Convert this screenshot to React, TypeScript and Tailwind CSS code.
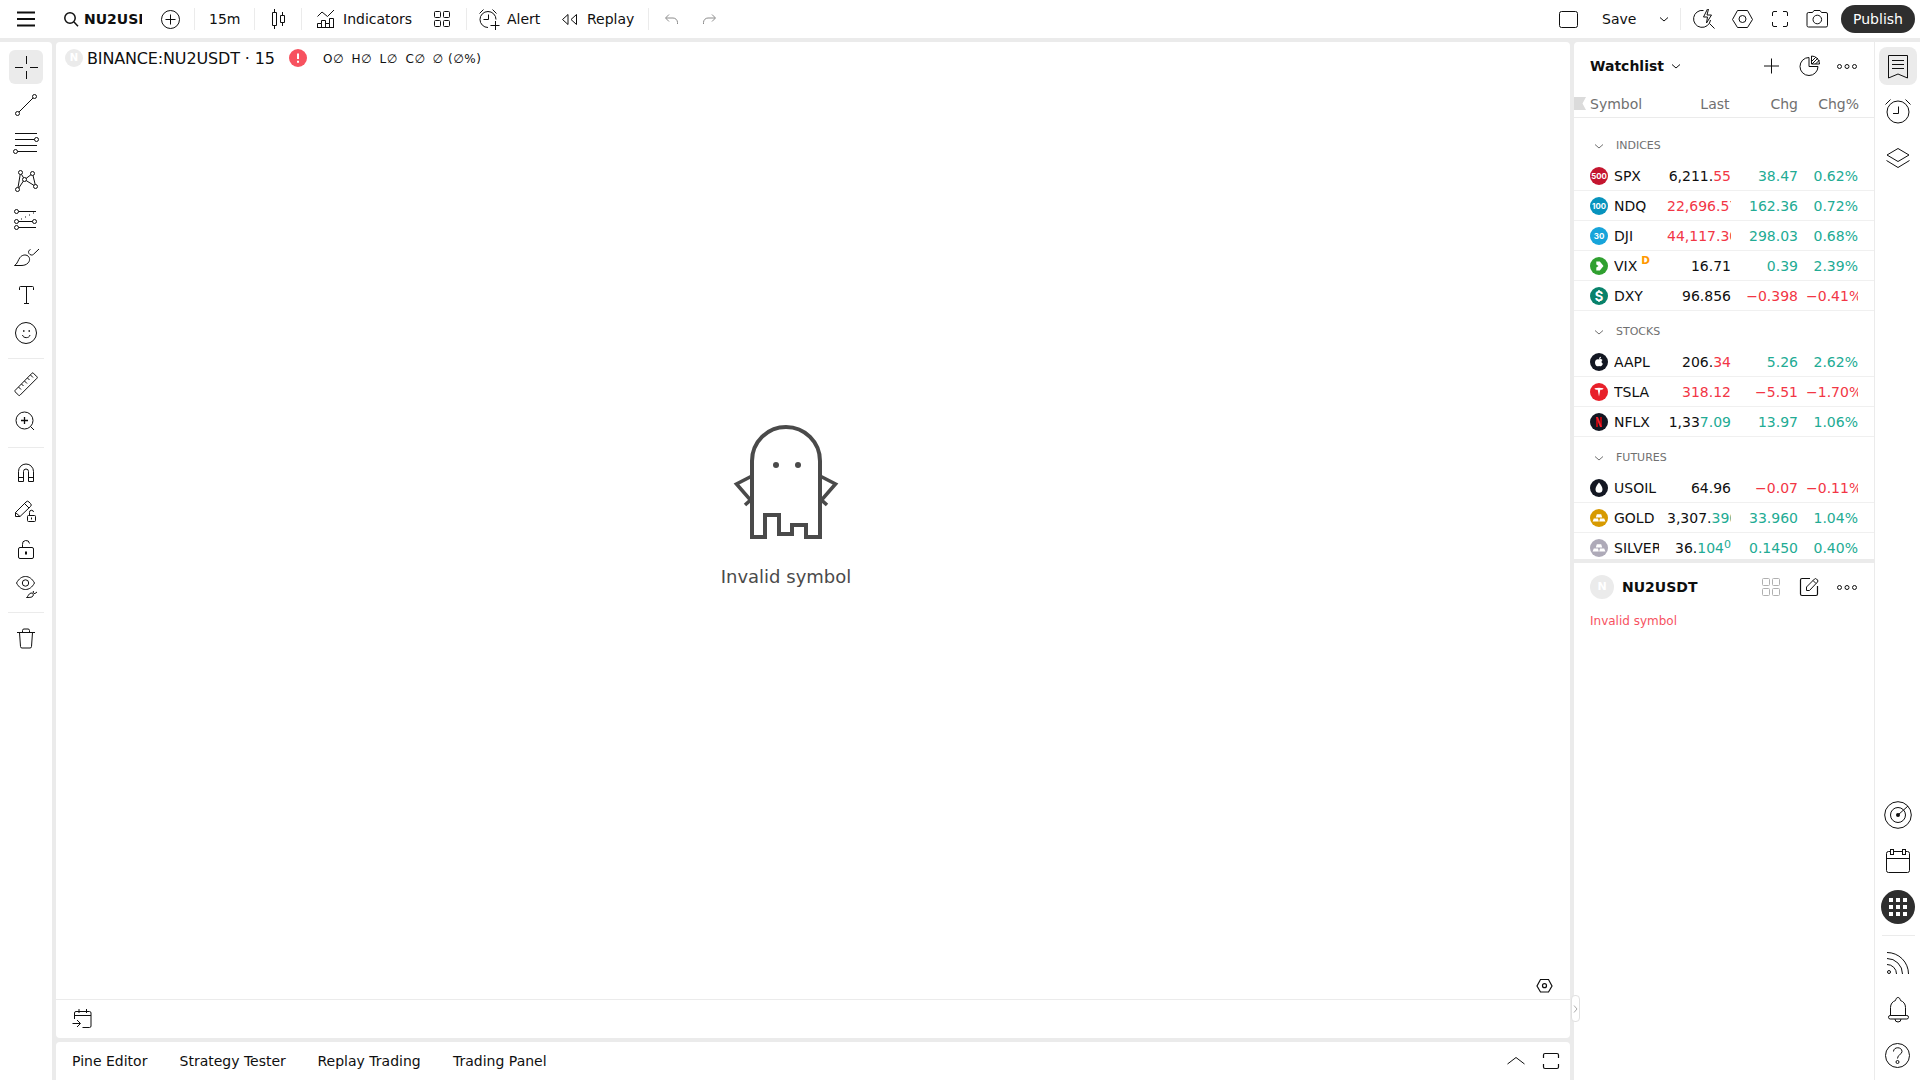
import React from "react";

type IconProps = { children: React.ReactNode; className?: string };

/** Line icon on a 28-unit grid. */
function Icon({ children, className = "" }: IconProps) {
  return (
    <svg width="28" height="28" viewBox="0 0 28 28" fill="none" stroke="currentColor" className={"shrink-0 " + className}>
      {children}
    </svg>
  );
}

/** Line icon drawn around its own centre. */
function Centered({ children, className = "" }: IconProps) {
  return (
    <svg width="44" height="46" viewBox="-22 -23 44 46" fill="none" stroke="currentColor" className={"shrink-0 " + className}>
      {children}
    </svg>
  );
}

const Separator = ({ className = "" }: { className?: string }) => (
  <div className={"h-[22px] w-px shrink-0 bg-[#ebebeb] " + className} />
);

function TopBar() {
  return (
    <header className="flex h-[38px] shrink-0 items-center bg-white">
      <Icon className="ml-3">
        <path d="M5 7.5h18M5 14h18M5 20.5h18" strokeWidth="2" />
      </Icon>
      <div className="ml-5 flex h-full w-[82px] items-center">
        <Icon>
          <circle cx="10" cy="13" r="5.2" strokeWidth="1.5" />
          <path d="M14 17l4 4.2" strokeWidth="1.5" />
        </Icon>
        <span className="-ml-1 w-[58px] overflow-hidden whitespace-nowrap font-bold">NU2USDT</span>
      </div>
      <Icon className="ml-[14px]">
        <circle cx="14.5" cy="14.5" r="9" />
        <path d="M9.5 14.5h10M14.5 9.5v10" />
      </Icon>
      <Separator className="ml-[10px]" />
      <span className="ml-[14px] w-[45px]">15m</span>
      <Separator />
      <Icon className="ml-[9px] mr-[9px]">
        <path d="M8.5 7.5h4v13h-4zM10.5 4v3.5M10.5 20.500v3.500M16.500 10.500h4v7h-4zM18.500 7v3.500M18.500 17.500v3.500" />
      </Icon>
      <Separator />
      <Icon className="ml-[10px]">
        <path d="M5.500 11.500l4.500-4.500 5.500 4.500 6.500-6.500M5.500 23v-4.500h4v4.500M9.500 18.500v-3h4v7.500M13.500 18.500h4v4.500M17.500 18.500v-5h4v9.500M5 22.500h17" />
      </Icon>
      <span className="ml-[3px] w-[85px]">Indicators</span>
      <Icon>
        <rect x="6.500" y="6.500" width="6" height="6" rx="1" />
        <rect x="15.500" y="6.500" width="6" height="6" rx="1" />
        <rect x="6.500" y="15.500" width="6" height="6" rx="1" />
        <rect x="15.500" y="15.500" width="6" height="6" rx="1" />
      </Icon>
      <Separator className="ml-[10px]" />
      <Icon className="ml-2">
        <path d="M21 14.500a8 8 0 1 0-8 8M4.500 8.500l4-4M17.500 4.500l4 4M8.500 14.500h5V9.500M15.500 20.500h9M20.500 16v9" />
      </Icon>
      <span className="ml-1 w-[48px]">Alert</span>
      <Icon>
        <path d="M13 9.500v10L7.500 14.500zM21.500 9.500v10L16 14.500z" />
      </Icon>
      <span className="ml-[4px] w-[61px]">Replay</span>
      <Separator />
      <Icon className="ml-[9px] text-[#8c8c8c]">
        <path d="M11 9.500L7.500 13l3.500 3.500M8 13h7a4.500 4.500 0 0 1 4.500 4.500V19" />
      </Icon>
      <Icon className="ml-[10px] text-[#8c8c8c]">
        <path d="M16 9.500l3.500 3.500-3.500 3.500M19 13h-7a4.500 4.500 0 0 0-4.500 4.500V19" />
      </Icon>

      <div className="ml-auto flex h-full items-center">
        <Icon>
          <rect x="4.500" y="6.500" width="18" height="16" rx="2" />
        </Icon>
        <span className="ml-[19px] w-[48px]">Save</span>
        <Icon>
          <path d="M10 12.500l4 3.500 4-3.500" />
        </Icon>
        <Separator className="ml-[2px]" />
        <Icon className="ml-[10px]">
          <path d="M12.500 5.500A8.500 8.500 0 1 0 19.500 15M18.500 18.500l5 5M16.500 4l-4 8h4l-1 6 5-8h-4.500l1.500-6" strokeLinejoin="round" />
        </Icon>
        <Icon className="ml-[9px]">
          <path d="M9.500 5.500h10l5 9-5 8h-10l-5-8z" strokeLinejoin="round" />
          <circle cx="14.500" cy="14" r="3.500" />
        </Icon>
        <Icon className="ml-[10px]">
          <path d="M6.500 11V8a1.500 1.500 0 0 1 1.500-1.500h3M17 6.500h3A1.500 1.500 0 0 1 21.500 8v3M21.500 17v3a1.500 1.500 0 0 1-1.500 1.500h-3M11 21.500H8A1.500 1.500 0 0 1 6.500 20v-3" />
        </Icon>
        <Icon className="ml-[9px]">
          <path d="M9.500 7.500L11 5.500h6l1.500 2H23a1.500 1.500 0 0 1 1.500 1.500v11.500A1.500 1.500 0 0 1 23 22H5.500A1.500 1.500 0 0 1 4 20.500V9a1.500 1.500 0 0 1 1.500-1.500z" />
          <circle cx="14.300" cy="14.500" r="4.300" />
        </Icon>
        <button className="ml-[10px] mr-[5px] h-7 w-[74px] rounded-full bg-[#2e2e2e] text-white">Publish</button>
      </div>
    </header>
  );
}

const drawingTools: React.ReactNode[][] = [
  [
    <path d="M14.500 3v8M14.500 18v8M3 14.500h8M18 14.500h8" />,
    <>
      <path d="M7 21L21 7" />
      <circle cx="5.500" cy="22.500" r="2" />
      <circle cx="22.500" cy="5.500" r="2" />
    </>,
    <>
      <path d="M3 4.500h22M3 10.500h19.500M3 16.500h22M5.500 22.500H25" />
      <circle cx="24.500" cy="10.500" r="2" />
      <circle cx="3.500" cy="22.500" r="2" />
    </>,
    <>
      <path d="M8.200 7.500L6 20.500M9.500 7.300l2 3.500M6.800 21l4.600-7M14 11.500l5-3.800M14.200 13.600l7.800 4.800M21 8.500l2.200 9" />
      <circle cx="8.500" cy="5.500" r="2" />
      <circle cx="20.500" cy="6.500" r="2" />
      <circle cx="12.500" cy="12.500" r="2" />
      <circle cx="5.500" cy="22.500" r="2" />
      <circle cx="23.500" cy="19.500" r="2" />
    </>,
    <>
      <path d="M6.500 6.500H24M6.500 16.500h14M6.500 22.500H24" />
      <path d="M9 14h1M13 12h1M17 10h1M21 8h1" />
      <circle cx="4.500" cy="6.500" r="2" />
      <circle cx="4.500" cy="16.500" r="2" />
      <circle cx="22.500" cy="16.500" r="2" />
      <circle cx="4.500" cy="22.500" r="2" />
    </>,
    <>
      <path d="M2.500 22.500c3-1.500 3.500-5.500 5.500-8 2-2.600 5.500-3.300 8-1.500 2.200 1.800 2 5 0 7-1.700 1.800-4 2.500-7 2.500z" />
      <path d="M18.500 6.500c-2 .8-2.500 2.500-1.500 4 1.200 1.800 3.300 2 4.500.8L27 6" />
    </>,
    <path d="M7.500 9V6.500a1 1 0 0 1 1-1h12a1 1 0 0 1 1 1V9M14.500 5.500v17M12 22.500h5" />,
    <>
      <circle cx="14" cy="14" r="10.500" />
      <path d="M10.500 16c.5 3.500 7 3.500 7.500 0" />
      <path d="M11 12h1.500M16.500 12H18" strokeWidth="1.500" />
    </>,
  ],
  [
    <>
      <path d="M3 20.500L20 3.200a1 1 0 0 1 1.400 0L25 6.800a1 1 0 0 1 0 1.400L8 25.200a1 1 0 0 1-1.400 0L3 21.700a1 1 0 0 1 0-1.200z" />
      <path d="M6.500 17l2.500 2.500M9.500 14l2 2M12.500 11l2.500 2.500M15.500 8l2 2M18.500 5l2.500 2.500" />
    </>,
    <>
      <circle cx="12.500" cy="12.500" r="8.500" />
      <path d="M9 12.500h7M12.500 9v7" strokeWidth="1.300" />
      <path d="M18.500 18.500L22 22" />
    </>,
  ],
  [
    <path d="M6.500 22.500v-10a7.500 7.500 0 0 1 15 0v10h-5v-10a2.500 2.500 0 0 0-5 0v10zM6.500 18.500h5M16.500 18.500h5" />,
    <>
      <path d="M3.500 19.500v-4L14 5a2 2 0 0 1 3 0l1.500 1.500a2 2 0 0 1 0 3L8 19.500zM12.500 6.500l4.500 4.500M3.500 15.500l4.500 4" />
      <rect x="15.500" y="18.500" width="8" height="6" rx="1" />
      <path d="M17.500 18.500V15.500a2 2 0 0 1 4-.5M19.500 20.500v2" />
    </>,
    <>
      <rect x="6.500" y="12.500" width="15" height="11" rx="1.500" />
      <path d="M10.500 12.500V9.500a3.500 3.500 0 0 1 7-1" />
      <path d="M14 16.500v3" strokeWidth="2" />
    </>,
    <>
      <path d="M4.500 10c2.500-4.500 5.500-6.500 9-6.500s6.500 2 9 6.500c-2.500 4.500-5.500 6.500-9 6.500s-6.500-2-9-6.500z" />
      <circle cx="13.500" cy="10" r="3.200" />
      <path d="M14.500 24.500c1.500-.5 2-4 4.500-4.500 2-.2 2.800 1.500 2 3-.8 1.300-2.500 1.500-6.500 1.500zM21.500 18c-.8 1.500 0 3 1.500 2.500l2-1.500" />
    </>,
  ],
  [
    <path d="M5 8.500h18M10.500 8.500v-2a1.500 1.500 0 0 1 1.500-1.500h4a1.500 1.500 0 0 1 1.500 1.500v2M7.500 8.500l1 14a1.500 1.500 0 0 0 1.500 1.500h8a1.500 1.500 0 0 0 1.500-1.500l1-14" />,
  ],
];

function DrawingBar() {
  return (
    <nav className="flex w-[52px] shrink-0 flex-col items-center rounded-tr bg-white pt-[6px]">
      {drawingTools.map((group, g) => (
        <React.Fragment key={g}>
          {g > 0 && <div className="my-[6px] h-px w-9 shrink-0 bg-[#ebebeb]" />}
          {group.map((drawing, i) => (
            <div key={i} className="flex h-[38px] shrink-0 items-center">
              <div className={"flex h-[34px] w-[34px] items-center justify-center rounded-md " + (g === 0 && i === 0 ? "bg-[#ebebeb]" : "")}>
                <Icon>{drawing}</Icon>
              </div>
            </div>
          ))}
        </React.Fragment>
      ))}
    </nav>
  );
}

function Chart() {
  return (
    <section className="flex min-h-0 flex-1 flex-col rounded bg-white">
      <div className="flex h-8 items-center pl-[9px]">
        <span className="flex h-[18px] w-[18px] items-center justify-center rounded-full bg-[#ebebeb] text-[10px] font-bold text-white">N</span>
        <span className="ml-1 mt-0.5 w-[202px] whitespace-nowrap text-[16px] tracking-[-0.15px]">BINANCE:NU2USDT · 15</span>
        <svg width="18" height="18" viewBox="0 0 18 18">
          <circle cx="9" cy="9" r="9" fill="#f7525f" />
          <path d="M9 4.500v5.500M9 11.800v1.900" stroke="#fff" strokeWidth="2" />
        </svg>
        <div className="ml-4 mt-px flex whitespace-nowrap text-[12px] tracking-[0.6px]">
          <span className="w-[28.5px]">O∅</span>
          <span className="w-[28px]">H∅</span>
          <span className="w-[26px]">L∅</span>
          <span className="w-[27px]">C∅</span>
          <span>∅ (∅%)</span>
        </div>
      </div>
      <div className="flex flex-1 flex-col items-center pr-[54px] pt-[349px] text-[#4a4a4a]">
        <svg width="108" height="120" viewBox="732 423 108 120" fill="none" stroke="currentColor" strokeWidth="4">
          <path d="M752 461a34 34 0 0 1 68 0v76h-14v-12h-14v9h-13v-19h-14v22h-13z" />
          <path d="M752 476l-15.500 8 14 16-5.500 5M820 476l15.500 8-14 16 5.500 5" strokeWidth="3.600" />
          <circle cx="776" cy="465" r="3" fill="currentColor" stroke="none" />
          <circle cx="798" cy="465" r="3" fill="currentColor" stroke="none" />
        </svg>
        <p className="mt-[21px] text-[18px] leading-[26px]">Invalid symbol</p>
      </div>
      <div className="flex h-7 items-center justify-end pr-3 pt-0.5">
        <Icon>
          <path d="M10.500 7.500h8l3.500 6.500-3.500 6h-8L7 14z" strokeWidth="1.200" />
          <circle cx="14.500" cy="13.700" r="2" strokeWidth="1.200" />
        </Icon>
      </div>
      <div className="flex h-[39px] items-center border-t border-[#ebebeb] pl-3">
        <Icon>
          <path d="M6.500 14V8a1.500 1.500 0 0 1 1.500-1.500h13.500A1.500 1.500 0 0 1 23 8v13a1.500 1.500 0 0 1-1.500 1.500H14.500M6.500 10.500h16.500M11 4v4M18.500 4v4M4.500 18.500h7.500M9 15l3.500 3.500L9 22" />
        </Icon>
      </div>
    </section>
  );
}

function BottomTabs() {
  return (
    <footer className="flex h-[38px] shrink-0 items-center rounded-t bg-white pl-4">
      <span className="w-[107.5px]">Pine Editor</span>
      <span className="w-[138px]">Strategy Tester</span>
      <span className="w-[135.5px]">Replay Trading</span>
      <span>Trading Panel</span>
      <Icon className="ml-auto">
        <path d="M5.500 17l8.500-6.500 8.500 6.500" />
      </Icon>
      <Icon className="ml-[7px] mr-[5px]">
        <path d="M6.500 11V8A1.500 1.500 0 0 1 8 6.500h12A1.500 1.500 0 0 1 21.500 8v3M6.500 17v3A1.500 1.500 0 0 0 8 21.500h12a1.500 1.500 0 0 0 1.500-1.500v-3" strokeWidth="1.200" />
      </Icon>
    </footer>
  );
}

const G = "text-[#22ab94]";
const R = "text-[#f23645]";

type Part = [string, string?];
type Row = { symbol: string; last: Part[]; sup?: string; chg: string; pct: string; tone: string; logo: React.ReactNode; badge?: string };

const Logo = ({ fill, children }: { fill: string; children?: React.ReactNode }) => (
  <svg width="18" height="18" viewBox="0 0 18 18" className="shrink-0">
    <circle cx="9" cy="9" r="9" fill={fill} />
    {children}
  </svg>
);

const LogoText = ({ children, size }: { children: string; size: number }) => (
  <text x="9" y={9 + size * 0.36} textAnchor="middle" fontSize={size} fontWeight="700" fill="#fff" fontFamily="Inter, sans-serif">
    {children}
  </text>
);

const Bars = () => <path d="M6.800 5.200h4.400l1 3.200H5.800zM3.800 9.400h4.200l.8 3H2.600zM10 9.400h4.200l1.200 3H9.200z" fill="#fff" />;

const groups: { name: string; rows: Row[] }[] = [
  {
    name: "INDICES",
    rows: [
      { symbol: "SPX", last: [["6,211."], ["55", R]], chg: "38.47", pct: "0.62%", tone: G, logo: <Logo fill="#c4162f"><LogoText size={7.8}>500</LogoText></Logo> },
      { symbol: "NDQ", last: [["22,696.57", R]], chg: "162.36", pct: "0.72%", tone: G, logo: <Logo fill="#0793bd"><LogoText size={7.8}>100</LogoText></Logo> },
      { symbol: "DJI", last: [["44,117.30", R]], chg: "298.03", pct: "0.68%", tone: G, logo: <Logo fill="#17a4da"><LogoText size={8}>30</LogoText></Logo> },
      { symbol: "VIX", badge: "D", last: [["16.71"]], chg: "0.39", pct: "2.39%", tone: G, logo: <Logo fill="#30a030"><path d="M6.300 4.500h3.500L13.500 9l-3.700 4.500H6.300v-3l2.200-1.500-2.200-1.500z" fill="#fff" /></Logo> },
      { symbol: "DXY", last: [["96.856"]], chg: "−0.398", pct: "−0.41%", tone: R, logo: <Logo fill="#08826b"><LogoText size={13}>S</LogoText><path d="M9 3v2M9 13v2" stroke="#fff" strokeWidth="1.500" /></Logo> },
    ],
  },
  {
    name: "STOCKS",
    rows: [
      { symbol: "AAPL", last: [["206."], ["34", R]], chg: "5.26", pct: "2.62%", tone: G, logo: <Logo fill="#131722"><path d="M9 6.500c1-.6 2.600-.7 3.500.6-1.500 1-1.200 3 .4 3.700-.6 1.400-1.300 2.400-2.200 2.400-.6 0-1-.3-1.600-.3s-1 .3-1.600.3C6 13.200 4.900 11 5 9.200 5.200 6.800 7.300 5.700 9 6.500zM9 6c-.1-1.200.8-2.200 2-2.300C11.100 5 10.200 6 9 6z" fill="#fff" /></Logo> },
      { symbol: "TSLA", last: [["318.12", R]], chg: "−5.51", pct: "−1.70%", tone: R, logo: <Logo fill="#e8202a"><path d="M4.500 5.300c3-.8 6-.8 9 0-.3 1-1.200 1.500-3.200 1.500L9 13.500 7.700 6.800c-2 0-2.900-.5-3.200-1.500z" fill="#fff" /></Logo> },
      { symbol: "NFLX", last: [["1,33"], ["7.09", G]], chg: "13.97", pct: "1.06%", tone: G, logo: <Logo fill="#131722"><path d="M6 4h2v10H6zM10 4h2v10h-2z" fill="#b20710" /><path d="M6 4h2l4 10h-2z" fill="#f5222d" /></Logo> },
    ],
  },
  {
    name: "FUTURES",
    rows: [
      { symbol: "USOIL", last: [["64.96"]], chg: "−0.07", pct: "−0.11%", tone: R, logo: <Logo fill="#131722"><path d="M9 3.500c2 2.600 3.500 4.600 3.500 6.800a3.500 3.500 0 0 1-7 0C5.500 8.100 7 6.100 9 3.500z" fill="#fff" /></Logo> },
      { symbol: "GOLD", last: [["3,307."], ["390", G]], chg: "33.960", pct: "1.04%", tone: G, logo: <Logo fill="#d79a00"><Bars /></Logo> },
      { symbol: "SILVER", last: [["36."], ["104", G]], sup: "0", chg: "0.1450", pct: "0.40%", tone: G, logo: <Logo fill="#aeaab8"><Bars /></Logo> },
    ],
  },
];

function WatchRow({ row }: { row: Row }) {
  const wide = row.last.map((p) => p[0]).join("").length >= 9;
  return (
    <div className="flex h-[30px] shrink-0 items-center whitespace-nowrap border-b border-[#f0f0f0] pl-4">
      {row.logo}
      <div className="ml-1.5 flex h-full w-[45px] items-center overflow-hidden">
        {row.symbol}
        {row.badge && <span className="mb-[11px] ml-1 text-[10.5px] font-bold text-[#ff9800]">{row.badge}</span>}
      </div>
      <div className={"ml-2 flex w-16 items-center overflow-hidden " + (wide ? "justify-start" : "justify-end")}>
        {row.last.map(([text, tone], i) => (
          <span key={i} className={tone ?? ""}>{text}</span>
        ))}
        {row.sup && <span className="mb-[5px] text-[11px] text-[#22ab94]">{row.sup}</span>}
      </div>
      <div className={"w-[67px] text-right " + row.tone}>{row.chg}</div>
      <div className={"flex overflow-hidden " + (row.pct.length > 5 ? "ml-2 w-[52px] justify-start " : "ml-[9px] w-[51px] justify-end ") + row.tone}>{row.pct}</div>
    </div>
  );
}

const Dots = () => (
  <>
    <circle cx="6.500" cy="14.500" r="2" />
    <circle cx="14" cy="14.500" r="2" />
    <circle cx="21.500" cy="14.500" r="2" />
  </>
);

function Watchlist() {
  return (
    <div className="flex w-[300px] shrink-0 flex-col">
      <div className="flex h-[517px] shrink-0 flex-col overflow-hidden rounded-tl bg-white">
        <div className="flex h-12 shrink-0 items-center pl-4">
          <span className="w-[72px] font-bold">Watchlist</span>
          <Icon>
            <path d="M10 12.500l4 3.500 4-3.500" />
          </Icon>
          <Icon className="ml-auto">
            <path d="M7 14h15M14.500 6.500v15" />
          </Icon>
          <Icon className="ml-[10px]">
            <path d="M14 5.500a9 9 0 1 0 9 9h-9z" />
            <path d="M16.500 4v8h8a8 8 0 0 0-8-8zM17 9l4-4M17 12l6-6M20.500 12l4-4" />
          </Icon>
          <Icon className="ml-[10px] mr-[13px]">
            <Dots />
          </Icon>
        </div>
        <div className="flex h-7 shrink-0 items-center border-b border-[#ebebeb] text-[#707070]">
          <svg width="12" height="13" viewBox="0 0 12 13" className="shrink-0">
            <path d="M0 0h12L8.500 6.500 12 13H0z" fill="#dbdbdb" />
          </svg>
          <span className="ml-1 w-[60px]">Symbol</span>
          <span className="w-[79.5px] text-right">Last</span>
          <span className="w-[68.5px] text-right">Chg</span>
          <span className="w-[61px] text-right">Chg%</span>
        </div>
        <div className="flex shrink-0 flex-col pt-[7px]">
          {groups.map((g) => (
            <React.Fragment key={g.name}>
              <div className="flex h-9 shrink-0 items-center pl-[11px] text-[11px] text-[#707070]">
                <Icon className="mt-1.5">
                  <path d="M10 12.500l4 3.500 4-3.500" />
                </Icon>
                <span className="ml-[3px] mt-1.5">{g.name}</span>
              </div>
              {g.rows.map((r) => (
                <WatchRow key={r.symbol} row={r} />
              ))}
            </React.Fragment>
          ))}
        </div>
      </div>
      <div className="mt-1 flex-1 bg-white">
        <div className="flex h-12 items-center pl-4">
          <span className="flex h-6 w-6 items-center justify-center rounded-full bg-[#ebebeb] text-[11px] font-bold text-white">N</span>
          <span className="ml-2 text-[14px] font-bold">NU2USDT</span>
          <Icon className="ml-auto text-[#b0b0b0]">
            <rect x="5.500" y="5.500" width="7" height="7" rx="1" />
            <rect x="15.500" y="5.500" width="7" height="7" rx="1" />
            <rect x="5.500" y="15.500" width="7" height="7" rx="1" />
            <rect x="15.500" y="15.500" width="7" height="7" rx="1" />
          </Icon>
          <Icon className="ml-[10px]">
            <path d="M15 5.500H7A1.500 1.500 0 0 0 5.500 7v14A1.500 1.500 0 0 0 7 22.500h14a1.500 1.500 0 0 0 1.500-1.500v-8" strokeWidth="1.200" />
            <path d="M11.500 17.500v-3.500l8-8a1.500 1.500 0 0 1 2 0l1 1a1.500 1.500 0 0 1 0 2l-8 8.500zM18 7.500l3 3" />
          </Icon>
          <Icon className="ml-[10px] mr-[13px]">
            <Dots />
          </Icon>
        </div>
        <p className="mt-px pl-4 text-[12px] leading-[18px] text-[#f7525f]">Invalid symbol</p>
      </div>
    </div>
  );
}

function WidgetBar() {
  return (
    <nav className="flex w-[46px] shrink-0 flex-col items-center border-l border-[#ebebeb] bg-white pl-px pt-px">
      <div className="flex h-[46px] items-center justify-center">
        <div className="flex h-[38px] w-[38px] items-center justify-center rounded-lg bg-[#ebebeb]">
          <Centered>
            <path d="M-9.500-10.500h19v22.500l-9.500-4-9.500 4zM-6-5.500h12M-6-1.500h12M-6 2.500h12" />
          </Centered>
        </div>
      </div>
      <Centered>
        <circle cx="0" cy="0" r="11" />
        <path d="M-5 1.500h5.500v-7M-12.500-7.500l5-5M12.500-7.500l-5-5" />
      </Centered>
      <Centered>
        <path d="M0-9.500l11 6.500L0 3.500-11-3zM-11.500 2.500L0 9.500l11.500-7" />
      </Centered>
      <div className="flex-1" />
      <Centered>
        <circle cx="0" cy="0" r="13.300" />
        <circle cx="0" cy="0" r="7.500" />
        <circle cx="0" cy="0" r="2" fill="currentColor" stroke="none" />
        <path d="M0 0l10-9" />
      </Centered>
      <Centered>
        <path d="M-7.500-9.500h-2a2 2 0 0 0-2 2v17a2 2 0 0 0 2 2h19a2 2 0 0 0 2-2v-17a2 2 0 0 0-2-2h-2M-4.500-9.500h9M-11.500-2.500h23" />
        <rect x="-7.500" y="-11.500" width="3" height="5" />
        <rect x="4.500" y="-11.500" width="3" height="5" />
      </Centered>
      <Centered>
        <circle cx="0" cy="0" r="17" fill="#2e2e2e" stroke="none" />
        <path d="M-9-7h4M-2-7h4M5-7h4M-9 0h4M-2 0h4M5 0h4M-9 7h4M-2 7h4M5 7h4" stroke="#fff" strokeWidth="4" />
      </Centered>
      <div className="mt-[5px] mb-1 h-px w-[33px] shrink-0 bg-[#ebebeb]" />
      <Centered>
        <path d="M-11-10.500a21.500 21.500 0 0 1 21.500 21.500M-11-4.500a15.500 15.500 0 0 1 15.500 15.500M-11 1.500a9.500 9.500 0 0 1 9.500 9.500" />
        <circle cx="-9" cy="9" r="1.500" />
      </Centered>
      <Centered>
        <path d="M-7.500 6.500v-8c0-3.500 2-6 5-7 .5-2 1.200-3 2.500-3s2 1 2.500 3c3 1 5 3.500 5 7v8" />
        <rect x="-9.500" y="6.500" width="20" height="3.500" rx="1.700" />
        <path d="M-3 10a3 3 0 0 0 6 0" />
      </Centered>
      <Centered>
        <circle cx="-.5" cy=".5" r="12" />
        <path d="M-4.500-3.500c0-5 8.500-5 8.500 0 0 3-4.500 3-4.500 7" />
        <circle cx="-.5" cy="7" r="1.500" />
      </Centered>
      <div className="h-[2px] shrink-0" />
    </nav>
  );
}

export default function App() {
  return (
    <div className="relative flex h-[1080px] w-[1920px] flex-col overflow-hidden bg-[#ebebeb] font-['DejaVu_Sans',sans-serif] text-[14px] leading-5 text-[#0f0f0f]">
      <TopBar />
      <div className="mt-1 flex min-h-0 flex-1">
        <DrawingBar />
        <main className="mx-1 flex min-w-0 flex-1 flex-col gap-1">
          <Chart />
          <BottomTabs />
        </main>
        <Watchlist />
        <WidgetBar />
      </div>
      <div className="absolute left-[1571px] top-[995px] flex h-[27px] w-[9px] items-center justify-center rounded border border-[#e0e0e0] bg-white">
        <svg width="5" height="8" viewBox="0 0 5 8" fill="none" stroke="#a8a8a8">
          <path d="M1 .5L4 4 1 7.500" />
        </svg>
      </div>
    </div>
  );
}
